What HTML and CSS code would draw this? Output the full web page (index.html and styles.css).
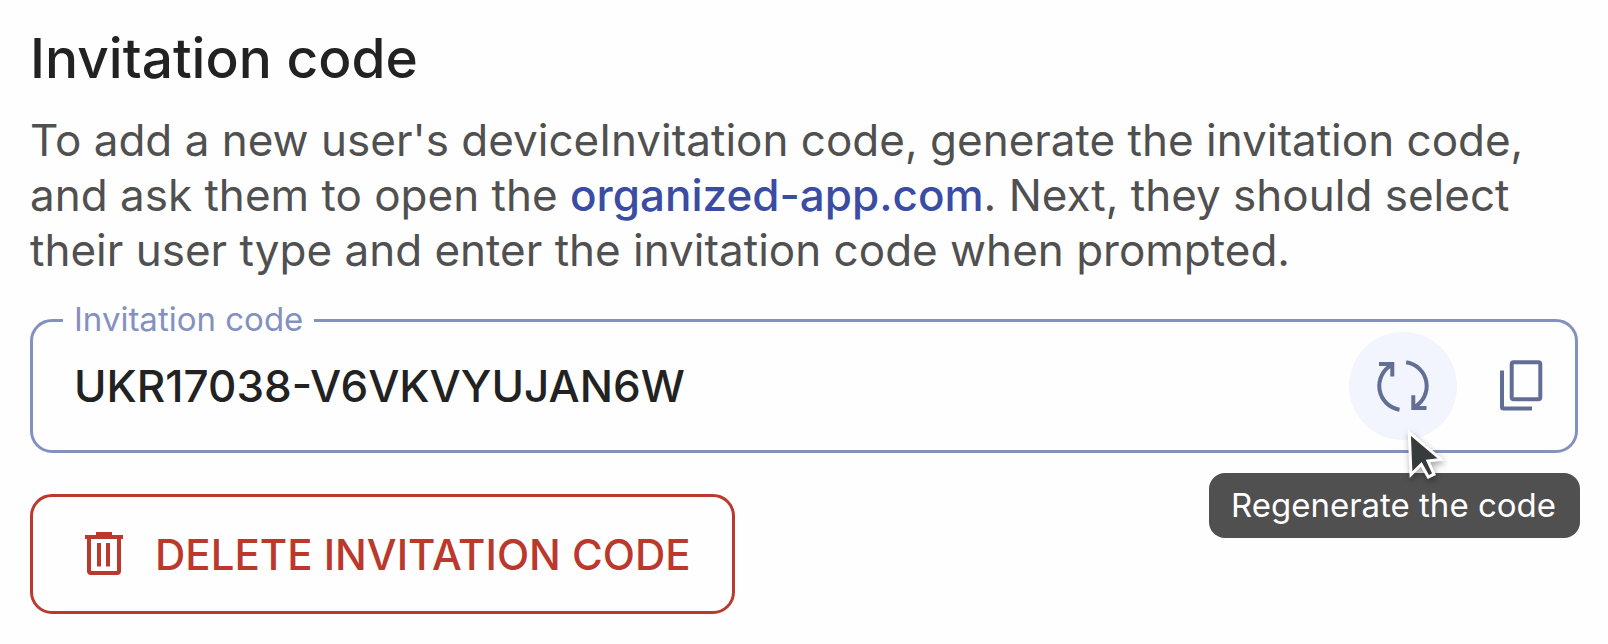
FILE: index.html
```html
<!DOCTYPE html>
<html lang="en">
<head>
<meta charset="utf-8">
<meta name="viewport" content="width=device-width, initial-scale=1">
<title>Invitation code</title>
<link rel="stylesheet" href="styles.css">
</head>
<body>
<main class="panel">
  <header class="intro">
    <h1 class="title">Invitation code</h1>
    <p class="text">To add a new user's deviceInvitation code, generate the invitation code, and ask them to open the <a class="link" href="#">organized-app.com</a>. Next, they should select their user type and enter the invitation code when prompted.</p>
  </header>
  <div class="field">
    <label class="field-label" for="code">Invitation code</label>
    <input class="field-input" id="code" type="text" value="UKR17038-V6VKVYUJAN6W" readonly>
    <div class="actions">
      <button class="icon-button is-hovered" type="button" aria-label="Regenerate" aria-describedby="tip">
        <svg class="icon" viewBox="0 0 66 66" aria-hidden="true">
          <path d="M9 11H22.3V23.5M22 11.800A24 24 0 0 0 29.5 56.7M36.2 9.3A24 24 0 0 1 44 54.2M56.5 55H43.3V42.3"/>
        </svg>
        <svg class="cursor" viewBox="0 0 48 60" aria-hidden="true">
          <path d="M6.3 5.500L8 47.500L18.300 37.500L25.300 50L31 47.200L25 34L38 32.400Z"/>
        </svg>
      </button>
      <button class="icon-button" type="button" aria-label="Copy code">
        <svg class="icon" viewBox="0 0 66 66" aria-hidden="true">
          <rect x="23.7" y="9.3" width="28.6" height="37" rx="2"/>
          <path d="M14 17.5V54Q14 55.5 15.5 55.5H44"/>
        </svg>
      </button>
    </div>
    <div class="tooltip" id="tip" role="tooltip">Regenerate the code</div>
  </div>
  <button class="delete" type="button">
    <svg class="icon" viewBox="0 0 66 66" aria-hidden="true">
      <path d="M14 16H52M25 13H41M18 16V50Q18 52 20 52H46Q48 52 48 50V16M28 22V45.500M37 22V45.500"/>
    </svg>
    <span>DELETE INVITATION CODE</span>
  </button>
</main>
</body>
</html>
```
FILE: styles.css
```css
* {
  box-sizing: border-box;
}

body {
  margin: 0;
  background: #fefefe;
  color: #222222;
  font-family: Inter, "Liberation Sans", sans-serif;
  font-optical-sizing: none;
}

.panel {
  display: flex;
  flex-direction: column;
  align-items: flex-start;
  gap: 41px;
  padding: 25px 30px;
}

.intro {
  display: flex;
  flex-direction: column;
  gap: 22px;
}

.title {
  margin: 0;
  font-size: 55px;
  font-weight: 500;
  line-height: 66px;
}

.text {
  margin: 0;
  color: #505050;
  font-size: 44px;
  line-height: 55px;
}

.link {
  color: #3b4ca3;
  font-weight: 500;
  text-decoration: none;
}

.field {
  position: relative;
  display: flex;
  align-items: center;
  width: 100%;
  padding: 10px 0 10px 41px;
  border: 3px solid #8491bf;
  border-radius: 22px;
}

.field-label {
  position: absolute;
  top: -22px;
  left: 30px;
  padding: 0 11px;
  background: #fefefe;
  color: #8491bf;
  font-size: 33px;
  line-height: 38px;
}

.field-input {
  flex: 1;
  min-width: 0;
  padding: 0;
  border: 0;
  outline: 0;
  background: none;
  color: #222222;
  font: inherit;
  font-size: 44px;
  font-weight: 500;
}

.actions {
  display: flex;
  gap: 10px;
}

.icon-button {
  position: relative;
  display: grid;
  place-items: center;
  width: 108px;
  height: 108px;
  padding: 0;
  border: 0;
  border-radius: 50%;
  background: none;
  color: #626e94;
}

.is-hovered {
  z-index: 2;
  background: #f2f5fe;
}

.icon {
  flex: none;
  width: 66px;
  height: 66px;
  fill: none;
  stroke: currentColor;
  stroke-width: 4;
}

.cursor {
  position: absolute;
  top: 95px;
  left: 54px;
  width: 48px;
  height: 60px;
  overflow: visible;
  fill: #363b3e;
  stroke: #ffffff;
  stroke-width: 3;
  filter: drop-shadow(1px 3px 3px rgb(0 0 0 / 35%));
}

.tooltip {
  position: absolute;
  z-index: 1;
  top: calc(100% + 23px);
  right: -5px;
  padding: 12px 24px 13px 22px;
  border-radius: 16px;
  background: #505050;
  color: #ffffff;
  font-size: 33px;
  line-height: 40px;
}

.delete {
  display: flex;
  align-items: center;
  gap: 18px;
  padding: 24px 41px 24px 38px;
  border: 3px solid #bb382d;
  border-radius: 22px;
  background: none;
  color: #bb382d;
  font: inherit;
  font-size: 42px;
  font-weight: 500;
}
```
